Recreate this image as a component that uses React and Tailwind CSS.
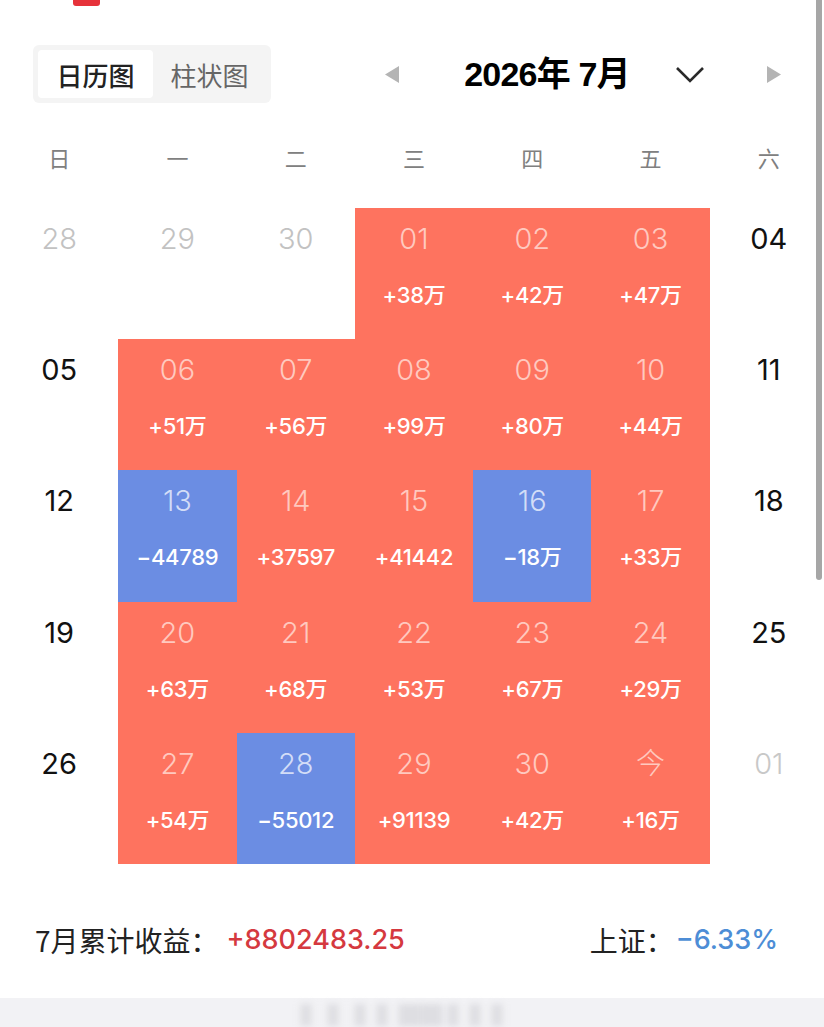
import React from 'react';

const FONT = '"Inter", "Noto Sans CJK SC", sans-serif';
const CJK = '"Noto Sans CJK SC", "Noto Sans", sans-serif';

// kind: 'prev' | 'weekend' | 'up' | 'down' | 'next'
const weeks = [
  [
    { d: '28', kind: 'prev' },
    { d: '29', kind: 'prev' },
    { d: '30', kind: 'prev' },
    { d: '01', kind: 'up', v: '+38万' },
    { d: '02', kind: 'up', v: '+42万' },
    { d: '03', kind: 'up', v: '+47万' },
    { d: '04', kind: 'weekend' },
  ],
  [
    { d: '05', kind: 'weekend' },
    { d: '06', kind: 'up', v: '+51万' },
    { d: '07', kind: 'up', v: '+56万' },
    { d: '08', kind: 'up', v: '+99万' },
    { d: '09', kind: 'up', v: '+80万' },
    { d: '10', kind: 'up', v: '+44万' },
    { d: '11', kind: 'weekend' },
  ],
  [
    { d: '12', kind: 'weekend' },
    { d: '13', kind: 'down', v: '−44789' },
    { d: '14', kind: 'up', v: '+37597' },
    { d: '15', kind: 'up', v: '+41442' },
    { d: '16', kind: 'down', v: '−18万' },
    { d: '17', kind: 'up', v: '+33万' },
    { d: '18', kind: 'weekend' },
  ],
  [
    { d: '19', kind: 'weekend' },
    { d: '20', kind: 'up', v: '+63万' },
    { d: '21', kind: 'up', v: '+68万' },
    { d: '22', kind: 'up', v: '+53万' },
    { d: '23', kind: 'up', v: '+67万' },
    { d: '24', kind: 'up', v: '+29万' },
    { d: '25', kind: 'weekend' },
  ],
  [
    { d: '26', kind: 'weekend' },
    { d: '27', kind: 'up', v: '+54万' },
    { d: '28', kind: 'down', v: '−55012' },
    { d: '29', kind: 'up', v: '+91139' },
    { d: '30', kind: 'up', v: '+42万' },
    { d: '今', kind: 'up', v: '+16万' },
    { d: '01', kind: 'next' },
  ],
];

const weekdays = ['日', '一', '二', '三', '四', '五', '六'];

function DayCell({ cell }) {
  const bg =
    cell.kind === 'up' ? 'bg-[#fe735f]' : cell.kind === 'down' ? 'bg-[#6b8de3]' : 'bg-white';
  const dateColor = {
    prev: 'text-[#c2c2c2] font-light',
    next: 'text-[#c8c8c8] font-light',
    weekend: 'text-[#111] font-normal',
    up: 'text-[#ffc9bf] font-light',
    down: 'text-[#d3ddf7] font-light',
  }[cell.kind];

  return (
    <div className={`h-[131.2px] flex flex-col items-center ${bg}`}>
      <div
        className={`pt-[14px] text-[29px] leading-[34px] ${dateColor}`}
        style={{ fontFamily: FONT }}
      >
        {cell.d}
      </div>
      {cell.v && (
        <div
          className="mt-[25px] text-[22px] leading-[28px] font-medium text-white tracking-[-0.3px]"
          style={{ fontFamily: FONT }}
        >
          {cell.v}
        </div>
      )}
    </div>
  );
}

export default function App() {
  return (
    <div className="relative w-[824px] h-[1027px] overflow-hidden bg-white">
      {/* red marker cut off at top */}
      <div className="ml-[73px] h-[6px] w-[27px] rounded-b-[3px] bg-[#e6323a]"></div>

      {/* Header */}
      <div className="mt-[39px] flex items-center">
        <div className="ml-[33px] flex h-[58px] w-[238px] rounded-md bg-[#f4f4f4] p-[5px]">
          <div
            className="flex w-[115px] items-center justify-center rounded bg-white text-[26px] font-medium text-[#222]"
            style={{ fontFamily: CJK }}
          >
            日历图
          </div>
          <div
            className="flex flex-1 items-center justify-center text-[26px] text-[#666]"
            style={{ fontFamily: CJK }}
          >
            柱状图
          </div>
        </div>

        <svg className="ml-[114px]" width="14" height="17" viewBox="0 0 14 17">
          <path d="M14 0 L14 17 L0 8.5 Z" fill="#b4b4b4" />
        </svg>

        <div
          className="ml-[48px] w-[200px] text-center text-[34px] font-bold text-black tracking-[-0.8px]"
          style={{ fontFamily: '"Liberation Sans", "Noto Sans CJK SC", sans-serif' }}
        >
          2026年 7月
        </div>

        <svg className="ml-[28px]" width="30" height="17" viewBox="0 0 30 17">
          <path d="M2 2 L15 15 L28 2" fill="none" stroke="#2a2a2a" strokeWidth="2.6" />
        </svg>

        <svg className="ml-[62px]" width="14" height="17" viewBox="0 0 14 17">
          <path d="M0 0 L0 17 L14 8.5 Z" fill="#b4b4b4" />
        </svg>
      </div>

      {/* Weekdays */}
      <div className="mt-[37px] grid w-[828px] grid-cols-7">
        {weekdays.map((w) => (
          <div
            key={w}
            className="h-[34px] text-center text-[22px] leading-[34px] text-[#808080]"
            style={{ fontFamily: CJK }}
          >
            {w}
          </div>
        ))}
      </div>

      {/* Calendar grid */}
      <div className="mt-[34px] grid w-[828px] grid-cols-7">
        {weeks.flat().map((cell, i) => (
          <DayCell key={i} cell={cell} />
        ))}
      </div>

      {/* Summary */}
      <div className="mt-[56px] flex h-[40px] items-center justify-between pl-[35px] pr-[46px]">
        <div className="flex items-center">
          <span className="text-[28px] text-[#222]" style={{ fontFamily: CJK }}>
            7月累计收益：
          </span>
          <span className="ml-[8px] text-[27px] font-medium text-[#d5393f]" style={{ fontFamily: FONT }}>
            +8802483.25
          </span>
        </div>
        <div className="flex items-center">
          <span className="text-[28px] text-[#222]" style={{ fontFamily: CJK }}>
            上证：
          </span>
          <span className="ml-[2px] text-[27px] font-medium text-[#4d8dd6]" style={{ fontFamily: FONT }}>
            −6.33%
          </span>
        </div>
      </div>

      {/* Bottom strip with blurred watermark */}
      <div className="absolute bottom-0 left-0 flex h-[29px] w-full items-center justify-center bg-[#f2f2f5]">
        <span
          className="ml-[-10px] text-[22px] leading-none text-[#dedee2] blur-[3px]"
          style={{ fontFamily: CJK }}
        >
          ▌ ▌ ▌▌██ ▌▌▌
        </span>
      </div>

      {/* scrollbar */}
      <div className="absolute right-[2px] top-0 h-[580px] w-[6px] rounded-b-full bg-[#a6a6a6]"></div>
    </div>
  );
}
